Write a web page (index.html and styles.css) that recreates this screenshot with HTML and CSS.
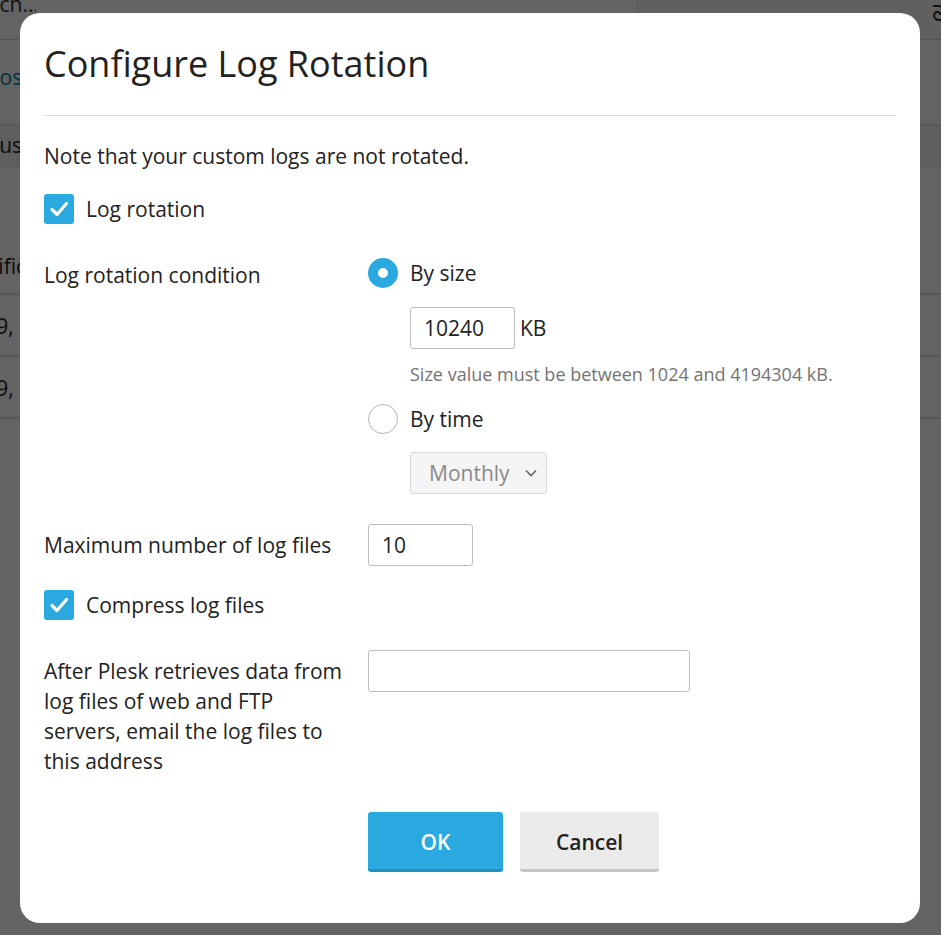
FILE: index.html
```html
<!DOCTYPE html>
<html lang="en">
<head>
<meta charset="utf-8">
<title>Configure Log Rotation</title>
<link rel="stylesheet" href="styles.css">
</head>
<body>
<div class="page">
  <div class="topbar">
    <div class="search"><span class="clip clip-search"><span class="search-text">Search...</span></span></div>
    <div class="topicon">ᘐ</div>
  </div>
  <div class="content">
    <div class="crumb"><span class="clip"><span class="shift-crumb">roscoe.com</span></span></div>
    <div class="tabs"><span class="clip"><span class="shift-tab">Custom Logs</span></span></div>
    <div class="listhead"><span class="clip"><span class="shift-head">Modification Date</span></span></div>
    <div class="row"><span class="clip"><span class="shift-row">Oct 29, 2020</span></span></div>
    <div class="row"><span class="clip"><span class="shift-row">Oct 29, 2020</span></span></div>
  </div>
</div>

<div class="overlay">
  <div class="dialog">
    <div class="dialog-head">
      <h1 class="dialog-title">Configure Log Rotation</h1>
    </div>
    <div class="dialog-body">
      <p class="note">Note that your custom logs are not rotated.</p>

      <label class="check check-first">
        <span class="box"><svg viewBox="0 0 30 30" width="30" height="30"><path d="M8 15.5l5 5 9.5-11" fill="none" stroke="#fff" stroke-width="3.2" stroke-linecap="round" stroke-linejoin="round"/></svg></span>
        <span class="check-text">Log rotation</span>
      </label>

      <div class="form-row row-condition">
        <div class="form-label">Log rotation condition</div>
        <div class="form-field">
          <div class="radio-row">
            <span class="radio radio-on"></span>
            <span class="radio-text">By size</span>
          </div>
          <div class="sub">
            <div class="size-line">
              <div class="input input-size">10240</div>
              <span class="unit">KB</span>
            </div>
            <div class="hint">Size value must be between 1024 and 4194304 kB.</div>
          </div>
          <div class="radio-row radio-time">
            <span class="radio"></span>
            <span class="radio-text">By time</span>
          </div>
          <div class="sub">
            <div class="select">
              <span>Monthly</span>
              <svg viewBox="0 0 12 8" width="12" height="8"><path d="M1 1.5l5 5 5-5" fill="none" stroke="#666" stroke-width="1.6"/></svg>
            </div>
          </div>
        </div>
      </div>

      <div class="form-row row-max">
        <div class="form-label">Maximum number of log files</div>
        <div class="form-field">
          <div class="input input-max">10</div>
        </div>
      </div>

      <label class="check check-compress">
        <span class="box"><svg viewBox="0 0 30 30" width="30" height="30"><path d="M8 15.5l5 5 9.5-11" fill="none" stroke="#fff" stroke-width="3.2" stroke-linecap="round" stroke-linejoin="round"/></svg></span>
        <span class="check-text">Compress log files</span>
      </label>

      <div class="form-row row-email">
        <div class="form-label label-multi">After Plesk retrieves data from log files of web and FTP servers, email the log files to this address</div>
        <div class="form-field">
          <div class="input input-email"></div>
        </div>
      </div>

      <div class="buttons">
        <button class="btn btn-ok">OK</button>
        <button class="btn btn-cancel">Cancel</button>
      </div>
    </div>
  </div>
</div>
</body>
</html>
```

FILE: styles.css
```css
* { box-sizing: border-box; }
html, body { margin: 0; padding: 0; }
body {
  font-family: "Open Sans", "Noto Sans", sans-serif;
  color: #222;
  background: #fff;
  width: 941px;
  height: 935px;
  overflow: hidden;
}

/* underlying page */
.page { position: relative; font-size: 21px; }
.clip {
  display: block;
  width: 21px;
  overflow: hidden;
  white-space: nowrap;
}
.clip-search { width: 36px; }
.topbar {
  height: 40px;
  display: flex;
  border-bottom: 1px solid #d8d8d8;
  background: #f7f7f7;
  overflow: hidden;
}
.search {
  width: 638px;
  background: #fff;
  line-height: 30px;
  color: #333;
  border-right: 1px solid #e4e4e4;
  overflow: hidden;
}
.search-text { display: inline-block; margin: -11px 0 0 -44px; vertical-align: top; }
.topicon {
  margin-left: auto;
  margin-right: -6px;
  font-size: 22px;
  line-height: 24px;
  color: #333;
}
.crumb { color: #0a7fb0; line-height: 30px; padding-top: 22px; height: 84px; }
.shift-crumb { display: inline-block; margin-left: -9px; }
.tabs {
  height: 43px;
  background: #f2f2f2;
  border-top: 1px solid #ddd;
  border-bottom: 1px solid #ddd;
  line-height: 40px;
}
.shift-tab { display: inline-block; margin-left: -14px; }
.listhead { height: 128px; line-height: 30px; padding-top: 84px; border-bottom: 2px solid #ddd; }
.shift-head { display: inline-block; margin-left: -46px; }
.row { height: 62px; line-height: 62px; border-bottom: 2px solid #e2e2e2; }
.shift-row { display: inline-block; margin-left: -55px; }

/* overlay + dialog */
.overlay {
  position: fixed;
  inset: 0;
  background: rgba(0, 0, 0, 0.61);
  display: flex;
  align-items: flex-start;
  padding: 13px 0 0 20px;
}
.dialog {
  width: 900px;
  height: 910px;
  background: #fff;
  border-radius: 20px;
  padding: 0 24px;
}
.dialog-head {
  padding: 28px 0 28px;
  border-bottom: 1px solid #dcdcdc;
}
.dialog-title {
  margin: 0;
  font-size: 36px;
  line-height: 46px;
  font-weight: 400;
  color: #222;
}
.dialog-body { font-size: 21px; line-height: 30px; }
.note { margin: 25px 0 0; }

.check { display: flex; align-items: center; gap: 12px; }
.check-first { margin-top: 23px; }
.check-compress { margin-top: 24px; }
.box {
  width: 30px;
  height: 30px;
  border-radius: 3px;
  background: #29a9df;
  display: block;
  flex: none;
}
.box svg { display: block; }

.form-row { display: flex; gap: 20px; }
.form-label { width: 304px; flex: none; }
.form-field { flex: 1; }
.row-condition { margin-top: 34px; }
.row-condition .form-label { padding-top: 2px; }
.radio-row { display: flex; align-items: center; gap: 12px; height: 30px; }
.radio {
  width: 30px;
  height: 30px;
  border-radius: 50%;
  border: 1px solid #b5b5b5;
  background: #fff;
  flex: none;
}
.radio-on {
  border: 10px solid #29a9df;
  background: #fff;
}
.radio-time { margin-top: 18px; }
.sub { padding-left: 42px; }
.size-line { display: flex; align-items: center; gap: 5px; margin-top: 19px; }
.input {
  height: 42px;
  border: 1px solid #bdbdbd;
  border-radius: 3px;
  background: #fff;
  padding: 0 13px;
  line-height: 40px;
  font-size: 21px;
  color: #222;
}
.input-size { width: 105px; }
.unit { font-size: 21px; }
.hint {
  margin-top: 13px;
  font-size: 18px;
  line-height: 24px;
  color: #737373;
}
.select {
  margin-top: 18px;
  width: 137px;
  height: 42px;
  border: 1px solid #dadada;
  border-radius: 3px;
  background: #f5f5f5;
  color: #8a8a8a;
  display: flex;
  align-items: center;
  justify-content: space-between;
  padding: 0 9px 0 18px;
  font-size: 21px;
}
.select svg { display: block; }

.row-max { margin-top: 30px; align-items: center; }
.input-max { width: 105px; }

.row-email { margin-top: 30px; }
.label-multi { padding-top: 6px; }
.input-email { width: 322px; }

.buttons {
  margin-top: 36px;
  padding-left: 324px;
  display: flex;
  gap: 17px;
}
.btn {
  font-family: inherit;
  font-size: 21px;
  font-weight: 600;
  height: 60px;
  border: none;
  border-radius: 3px;
  padding: 3px 0 0;
  cursor: pointer;
}
.btn-ok {
  width: 135px;
  background: #29a9df;
  color: #fff;
  border-bottom: 3px solid #2490c2;
}
.btn-cancel {
  width: 139px;
  background: #ebebeb;
  color: #222;
  border-bottom: 3px solid #c4c4c4;
}
```
